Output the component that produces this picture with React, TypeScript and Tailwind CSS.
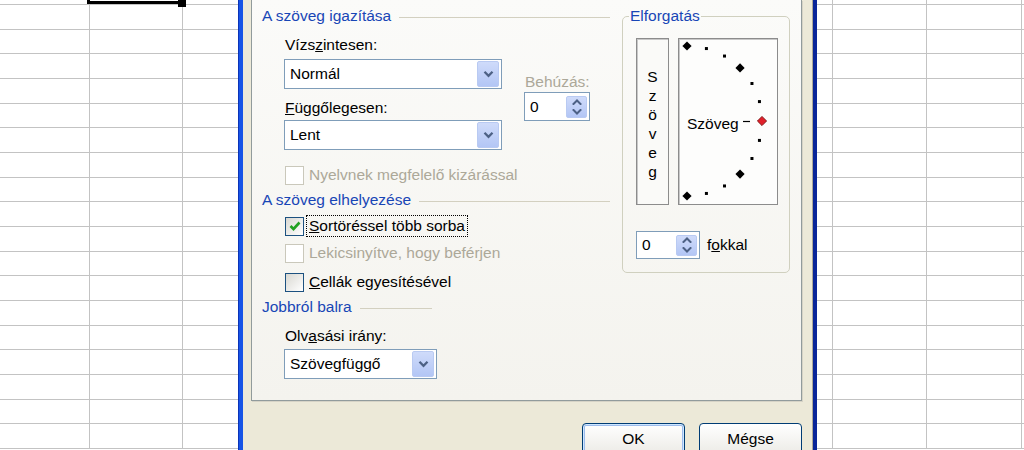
import React from "react";

function Sheet({ cols, width, selection }: { cols: string[]; width: string; selection?: boolean }) {
  const rows = Array.from({ length: 19 }, (_, i) => i);
  return (
    <div className={`${width} shrink-0 flex flex-col bg-white`}>
      {rows.map((r) => (
        <div key={r} className={`flex shrink-0 ${r === 0 ? "h-[5px]" : "h-[24.67px]"}`}>
          {cols.map((c, ci) => (
            <div
              key={ci}
              className={`${c} h-full relative border-b border-[#C3C3C3] ${ci < cols.length - 1 ? "border-r" : ""}`}
            >
              {selection && r === 0 && ci === 1 && (
                <>
                  <div className="absolute z-10 -left-[3px] -top-[20px] -right-[2px] bottom-0 border-[3px] border-black" />
                  <div className="absolute z-10 -right-[4px] -bottom-[3px] w-[8px] h-[7px] bg-black" />
                </>
              )}
            </div>
          ))}
        </div>
      ))}
    </div>
  );
}

function Heading({ text, lineClass }: { text: string; lineClass: string }) {
  return (
    <div className="flex items-center h-[18px] leading-[18px] text-[#1846B6]">
      <span className="whitespace-nowrap">{text}</span>
      <div className={`ml-[8px] mt-[3px] h-px bg-[#D3D0C0] ${lineClass}`} />
    </div>
  );
}

function Chevron({ up }: { up?: boolean }) {
  return (
    <svg width="10" height="6" viewBox="0 0 10 6">
      <path
        d={up ? "M1.5 5 L5 1.5 L8.5 5" : "M1.5 1 L5 4.5 L8.5 1"}
        stroke="#4D6185"
        strokeWidth="2"
        fill="none"
        strokeLinecap="square"
      />
    </svg>
  );
}

function DropBtn() {
  return (
    <div className="w-[22px] h-[26px] rounded-[2px] border border-[#B9CAF2] bg-linear-to-b from-[#CFDBFA] to-[#B3C6F5] flex items-center justify-center">
      <svg width="11" height="8" viewBox="0 0 11 8">
        <path d="M1.5 1.8 L5.5 5.8 L9.5 1.8" stroke="#4D6185" strokeWidth="2.3" fill="none" />
      </svg>
    </div>
  );
}

function Combo({ w, text }: { w: string; text: string }) {
  return (
    <div className={`${w} h-[30px] border border-[#7F9DB9] bg-white flex items-center pl-[5px] pr-[2px]`}>
      <span className="flex-1">{text}</span>
      <DropBtn />
    </div>
  );
}

function Spinner({ cls }: { cls: string }) {
  return (
    <div className={`${cls} border border-[#7F9DB9] bg-white flex items-center pl-[5px] pr-[2px]`}>
      <span className="flex-1">0</span>
      <div className="w-[21px] h-[calc(100%-5px)] rounded-[2px] border border-[#B9CAF2] bg-linear-to-b from-[#CFDBFA] to-[#B3C6F5] flex flex-col items-center justify-center gap-[4px]">
        <Chevron up />
        <Chevron />
      </div>
    </div>
  );
}

function CheckRow({
  checked,
  disabled,
  focused,
  children,
  cls,
}: {
  checked?: boolean;
  disabled?: boolean;
  focused?: boolean;
  children: React.ReactNode;
  cls: string;
}) {
  return (
    <div className={`flex items-center h-[22px] pl-[23px] ${cls}`}>
      <div
        className={`w-[19px] h-[19px] border flex items-center justify-center ${
          disabled ? "border-[#CAC8BB] bg-white" : "border-[#1C5180] bg-linear-to-br from-[#D9D8D2] to-white"
        }`}
      >
        {checked && (
          <svg width="14" height="14" viewBox="0 0 14 14">
            <path d="M2.5 7 L5.5 10 L11.5 3.5" stroke="#21A121" strokeWidth="2.6" fill="none" />
          </svg>
        )}
      </div>
      <span
        className={`ml-[2px] px-[2px] leading-[20px] border whitespace-nowrap ${
          focused ? "border-dotted border-black" : "border-transparent"
        } ${disabled ? "text-[#ACA899]" : ""}`}
      >
        {children}
      </span>
    </div>
  );
}

function Dial() {
  const cx = 8;
  const cy = 82;
  const r = 75;
  const angles = [90, 75, 60, 45, 30, 15, 0, -15, -30, -45, -60, -75, -90];
  return (
    <svg className="absolute inset-0" width="98" height="165" viewBox="0 0 98 165">
      <line x1="64" y1="82.5" x2="71" y2="82.5" stroke="#000" strokeWidth="1.2" />
      {angles.map((a) => {
        const rad = (a * Math.PI) / 180;
        const x = cx + r * Math.cos(rad);
        const y = cy - r * Math.sin(rad);
        const d = 4.6;
        const pts = `${x},${y - d} ${x + d},${y} ${x},${y + d} ${x - d},${y}`;
        if (a === 0) return <polygon key={a} points={pts} fill="#E0202A" stroke="#6B0000" strokeWidth="0.8" />;
        if (Math.abs(a) === 90 || Math.abs(a) === 45) return <polygon key={a} points={pts} fill="#000" />;
        return <rect key={a} x={x - 1.5} y={y - 1.5} width="3" height="3" fill="#000" />;
      })}
    </svg>
  );
}

function LeftCol() {
  return (
    <div className="w-[348px] shrink-0 flex flex-col pt-[7px] pb-[21px]">
      <Heading text="A szöveg igazítása" lineClass="flex-1" />
      <div className="flex pl-[22px] mt-[11px]">
        <div className="w-[218px] flex flex-col">
          <div className="h-[18px] pl-[1px]">
            Vízs<span className="underline">z</span>intesen:
          </div>
          <div className="mt-[5px]">
            <Combo w="w-[218px]" text="Normál" />
          </div>
          <div className="h-[18px] pl-[1px] mt-[10px]">
            <span className="underline">F</span>üggőlegesen:
          </div>
          <div className="mt-[3px]">
            <Combo w="w-[218px]" text="Lent" />
          </div>
        </div>
        <div className="ml-[22px] mt-[37px] flex flex-col">
          <div className="h-[18px] pl-[1px] text-[#ACA899]">Behúzás:</div>
          <div className="mt-[1px]">
            <Spinner cls="w-[66px] h-[29px]" />
          </div>
        </div>
      </div>
      <CheckRow disabled cls="mt-[14px]">
        Nyelvnek megfelelő kizárással
      </CheckRow>
      <div className="mt-[5px]">
        <Heading text="A szöveg elhelyezése" lineClass="flex-1" />
      </div>
      <CheckRow checked focused cls="mt-[6px]">
        <span className="underline">S</span>ortöréssel több sorba
      </CheckRow>
      <CheckRow disabled cls="mt-[5px]">
        Lekicsinyítve, hogy beférjen
      </CheckRow>
      <CheckRow cls="mt-[7px]">
        <span className="underline">C</span>ellák egyesítésével
      </CheckRow>
      <div className="mt-[5px]">
        <Heading text="Jobbról balra" lineClass="w-[72px]" />
      </div>
      <div className="h-[18px] pl-[23px] mt-[11px]">
        Olv<span className="underline">a</span>sási irány:
      </div>
      <div className="mt-[4px] pl-[22px]">
        <Combo w="w-[153px]" text="Szövegfüggő" />
      </div>
    </div>
  );
}

function RightCol() {
  const letters = ["S", "z", "ö", "v", "e", "g"];
  return (
    <div className="ml-[12px] w-[168px] shrink-0 pt-[7px]">
      <fieldset className="w-[168px] border border-[#D0D0BF] rounded-[5px] p-0 m-0">
        <legend className="ml-[6px] px-[1px] leading-[18px] text-[#1846B6]">Elforgatás</legend>
        <div className="pl-[13px] pb-[13px]">
          <div className="flex mt-[13px]">
            <div className="w-[33px] h-[167px] border border-[#8C8C8C] shadow-[inset_1px_1px_0_#C8C8C8] bg-[#FAFAF8] flex flex-col items-center pt-[28px] leading-[19px]">
              {letters.map((l, i) => (
                <span key={i}>{l}</span>
              ))}
            </div>
            <div className="ml-[9px] w-[100px] h-[167px] border border-[#8C8C8C] shadow-[inset_1px_1px_0_#C8C8C8] bg-[#FDFDFC] relative flex items-center">
              <span className="ml-[8px] mt-[5px]">Szöveg</span>
              <Dial />
            </div>
          </div>
          <div className="flex items-center mt-[26px]">
            <Spinner cls="w-[64px] h-[28px]" />
            <span className="ml-[7px]">
              f<span className="underline">o</span>kkal
            </span>
          </div>
        </div>
      </fieldset>
    </div>
  );
}

function XPButton({ children, isDefault }: { children: React.ReactNode; isDefault?: boolean }) {
  return (
    <button
      className={`w-[103px] h-[32px] shrink-0 rounded-[4px] border border-[#003C74] bg-linear-to-b from-white to-[#ECEBE6] text-black ${
        isDefault
          ? "shadow-[inset_0_0_0_1px_#CEE7FF,inset_0_0_0_2px_#9DBCEC]"
          : "shadow-[inset_0_-2px_0_#D6D0C5]"
      }`}
    >
      {children}
    </button>
  );
}

function Dialog() {
  return (
    <div className="w-[579px] shrink-0 h-[450px] flex">
      <div className="w-[5px] bg-[#1654E6] border-l border-[#0B33B8]" />
      <div className="w-[570px] bg-[#ECE9D8] border-r border-[#ACA899] pl-[8px] pr-[10px] flex flex-col">
        <div className="w-[551px] border-x border-b border-[#919B9C] bg-linear-to-b from-[#FBFBF9] to-[#F4F3EE] flex pl-[10px] shadow-[1px_1px_0_#D6D3C6]">
          <LeftCol />
          <RightCol />
        </div>
        <div className="flex justify-end gap-[14px] mt-[22px]">
          <XPButton isDefault>OK</XPButton>
          <XPButton>Mégse</XPButton>
        </div>
      </div>
      <div className="w-[4px] bg-[#0A2699]" />
    </div>
  );
}

export default function App() {
  return (
    <div className="w-[1024px] h-[450px] overflow-hidden flex bg-white text-black font-['Liberation_Sans',Arial,sans-serif] text-[15.5px] leading-[18px]">
      <Sheet cols={["w-[90px]", "w-[93px]", "flex-1"]} width="w-[238px]" selection />
      <Dialog />
      <Sheet cols={["w-[16px]", "w-[94px]", "w-[95px]", "flex-1"]} width="w-[207px]" />
    </div>
  );
}
